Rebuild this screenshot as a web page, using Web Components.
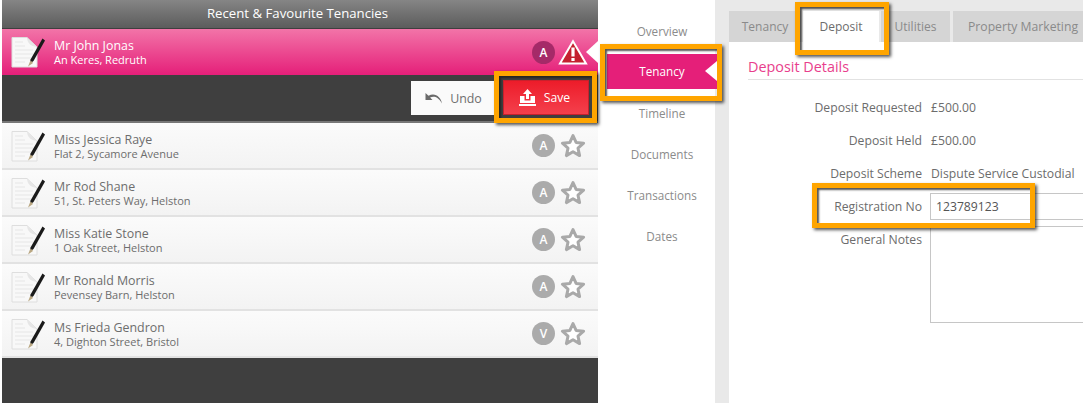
<!DOCTYPE html>
<html>
<head>
<meta charset="utf-8">
<style>
    html, body {
        margin: 0;
        width: 1083px;
        height: 403px;
        overflow: hidden;
        background: #fff;
        font-family: "Open Sans", "Noto Sans", sans-serif;
    }
</style>
</head>
<body>
<tenancy-app></tenancy-app>

<script>
const docIcon = /* html */ `
<svg width="34" height="34" viewBox="0 0 34 34">
    <path d="M1 2.500H16L26 12V32H1Z" fill="#f8f8f8" stroke="#dedede" stroke-width="1"/>
    <path d="M16 2.500C16.500 7 18 11 26 12Z" fill="#e6e6e6"/>
    <path d="M4 7H12M4 11H14M4 15H22M4 19H22M4 23H20M4 27H14" stroke="#e6e6e6" stroke-width="1.200"/>
    <path d="M31.500 3.500L34 5.500L22.500 26L19 28.500L19.500 24.500Z" fill="#1a1a1a"/>
    <path d="M19.200 26L17 31.500L22 28L21 26.500Z" fill="#b9a782"/>
</svg>`;

const starIcon = /* html */ `
<svg width="28" height="28" viewBox="0 0 28 28">
    <path d="M14 3.500L17.100 10.400L24.600 11.200L19 16.200L20.600 23.600L14 19.800L7.400 23.600L9 16.200L3.400 11.200L10.900 10.400Z"
        fill="#fff" stroke="#a9a9a9" stroke-width="3" stroke-linejoin="round"/>
</svg>`;

const warnIcon = /* html */ `
<svg width="30" height="26" viewBox="0 0 30 26">
    <path d="M15 2.200L28 24.500H2Z" fill="#c4212f" stroke="#fff" stroke-width="2" stroke-linejoin="miter"/>
    <rect x="13.400" y="8.500" width="3.200" height="9" fill="#fff"/>
    <rect x="13.400" y="19" width="3.200" height="3" fill="#fff"/>
</svg>`;

class TenancyRow extends HTMLElement {
    constructor() {
        super();
        const shadow = this.attachShadow({ mode: "open" });
        const letter = this.getAttribute("letter") || "A";
        const active = this.hasAttribute("active");
        shadow.innerHTML = /* html */ `
        <style>
            :host {
                display: flex;
                align-items: center;
                box-sizing: border-box;
                height: 47px;
                padding: 0 10px 0 9px;
                background: linear-gradient(#fbfbfb, #f3f3f3);
                border-bottom: 2px solid #e2e2e2;
                color: #6d6d6d;
            }
            :host([active]) {
                height: 46px;
                border-bottom: 0;
                background: linear-gradient(#f274a8, #e51f79);
                color: #fff;
            }
            .doc { width: 34px; height: 34px; margin-right: 9px; }
            .text { flex: 1; min-width: 0; padding-top: 2px; }
            .name { font-size: 12.4px; line-height: 15px; }
            .addr { font-size: 11px; line-height: 14px; }
            :host([active]) .text { padding-top: 1px; padding-bottom: 1px; }
            .badge {
                width: 23px;
                height: 23px;
                border-radius: 50%;
                background: #ababab;
                color: #fff;
                font-size: 12px;
                font-weight: 600;
                display: flex;
                align-items: center;
                justify-content: center;
            }
            :host([active]) .badge { background: #a52a68; }
            .flag { width: 30px; height: 28px; margin-left: 3px; display: flex; align-items: center; justify-content: center; }
            svg { display: block; }
        </style>
        <div class="doc">${docIcon}</div>
        <div class="text">
            <div class="name"><slot name="name"></slot></div>
            <div class="addr"><slot name="addr"></slot></div>
        </div>
        <div class="badge">${letter}</div>
        <div class="flag">${active ? warnIcon : starIcon}</div>
        `;
    }
}

class TenancyPanel extends HTMLElement {
    constructor() {
        super();
        const shadow = this.attachShadow({ mode: "open" });
        shadow.innerHTML = /* html */ `
        <style>
            :host {
                display: flex;
                flex-direction: column;
                width: 596px;
                height: 403px;
                margin-left: 2px;
                background: #3f3f3f;
                position: relative;
            }
            .title {
                height: 28px;
                box-sizing: border-box;
                padding: 0 5px 2px 0;
                border-bottom: 0;
                margin-bottom: 1px;
                background: linear-gradient(#858585, #5c5c5c);
                color: #fff;
                font-size: 13.2px;
                display: flex;
                align-items: center;
                justify-content: center;
            }
            .toolbar {
                height: 48px;
                box-sizing: border-box;
                padding: 6px 9px 6px 0;
                display: flex;
                justify-content: flex-end;
                align-items: flex-start;
                gap: 9px;
                border-bottom: 2px solid #777;
            }
            button {
                font: inherit;
                border: 0;
                display: flex;
                align-items: center;
                justify-content: center;
                height: 34px;
                padding: 0;
            }
            .undo { width: 83px; gap: 6px; padding-left: 2px; background: #fafafa; color: #6e6e6e; font-size: 12.4px; }
            .save {
                width: 86px;
                gap: 8px;
                height: 35px;
                margin-top: -1px;
                background: linear-gradient(#ed1c2a, #f4404c);
                border: 1px solid #c9202c;
                box-sizing: border-box;
                color: #fff;
                font-size: 12.2px;
                padding-right: 3px;
            }
            .pointer {
                position: absolute;
                right: 0;
                top: 41px;
                width: 0;
                height: 0;
                border-top: 11px solid transparent;
                border-bottom: 11px solid transparent;
                border-right: 12px solid #fff;
            }
        </style>
        <div class="title">Recent &amp; Favourite Tenancies</div>
        <slot name="current"></slot>
        <div class="toolbar">
            <button class="undo">
                <svg width="19" height="12" viewBox="0 0 18 12">
                    <path d="M0 1V8H7L4.600 5.600C8 3.800 12.500 4.300 16.500 11.500C15.500 5 9.500 0 3 3.700Z" fill="#6a6a6a"/>
                </svg>
                Undo
            </button>
            <button class="save">
                <svg width="17" height="18" viewBox="0 0 17 18">
                    <path d="M8.500 0L13 5H10V10H7V5H4Z" fill="#fff"/>
                    <path d="M1 7H5.500V11.500H11.500V7H16V14H1Z" fill="#fff"/>
                    <rect x="0" y="15" width="17" height="2" fill="#fff"/>
                </svg>
                Save
            </button>
        </div>
        <slot></slot>
        <div class="pointer"></div>
        `;
    }
}

class SideNav extends HTMLElement {
    constructor() {
        super();
        const shadow = this.attachShadow({ mode: "open" });
        const items = ["Overview", "Tenancy", "Timeline", "Documents", "Transactions", "Dates"];
        shadow.innerHTML = /* html */ `
        <style>
            :host {
                display: flex;
                flex-direction: column;
                box-sizing: border-box;
                width: 117px;
                padding: 17px 0 0 9px;
                background: #fff;
                color: #8b8b8b;
                font-size: 11.7px;
            }
            .item {
                height: 28px;
                line-height: 28px;
                margin-bottom: 13px;
                text-align: center;
                width: 110px;
                box-sizing: border-box;
            }
            .item.on {
                height: 35px;
                line-height: 35px;
                margin: 0 0 10px;
                background: #e51f79;
                color: #fff;
                position: relative;
            }
            .item.on::after {
                content: "";
                position: absolute;
                right: 0;
                top: 7px;
                border-top: 10px solid transparent;
                border-bottom: 10px solid transparent;
                border-right: 12px solid #fff;
            }
            .item:first-of-type { margin-bottom: 9px; }
        </style>
        ${items.map(t => `<div class="item ${t === "Tenancy" ? "on" : ""}">${t}</div>`).join("")}
        `;
    }
}

class DepositPanel extends HTMLElement {
    constructor() {
        super();
        const shadow = this.attachShadow({ mode: "open" });
        shadow.innerHTML = /* html */ `
        <style>
            :host {
                display: flex;
                flex-direction: column;
                flex: 1;
                min-width: 0;
                height: 403px;
                box-sizing: border-box;
                padding: 11px 0 0 14px;
                background: #e9e9e9;
                overflow: hidden;
                color: #6c6c6c;
                font-size: 12.2px;
            }
            .tabs { display: flex; gap: 2px; height: 31px; white-space: nowrap; font-size: 12px; }
            .tab {
                background: #d5d5d5;
                color: #8a8a8a;
                display: flex;
                align-items: center;
                justify-content: center;
                flex: none;
            }
            .tab.on { background: #fff; color: #6c6c6c; }
            .body { flex: 1; background: #fff; padding: 14px 0 0 19px; }
            h2 {
                margin: 0;
                height: 23px;
                line-height: 22px;
                font-size: 14.4px;
                font-weight: 400;
                color: #e83e8c;
                border-bottom: 1px solid #e2e2e2;
            }
            .form {
                display: grid;
                grid-template-columns: 174px 1fr;
                column-gap: 8px;
                margin-top: 11px;
                width: 400px;
            }
            .label { text-align: right; line-height: 33px; white-space: nowrap; }
            .value { line-height: 33px; white-space: nowrap; padding-left: 1px; }
            .input {
                box-sizing: border-box;
                height: 27px;
                margin: 3px 0 0 0;
                border: 1px solid #c6c6c6;
                padding-left: 5px;
                line-height: 25px;
                color: #555;
            }
            .area {
                box-sizing: border-box;
                height: 97px;
                margin-top: 3px;
                border: 1px solid #c6c6c6;
            }
            .notes { line-height: 20px; margin-top: 7px; }
        </style>
        <div class="tabs">
            <div class="tab" style="width:72px">Tenancy</div>
            <div class="tab on" style="width:76px">Deposit</div>
            <div class="tab" style="width:69px">Utilities</div>
            <div class="tab" style="width:140px;margin-left:1px;font-size:12.2px">Property Marketing</div>
        </div>
        <div class="body">
            <h2>Deposit Details</h2>
            <div class="form">
                <div class="label">Deposit Requested</div><div class="value">£500.00</div>
                <div class="label">Deposit Held</div><div class="value">£500.00</div>
                <div class="label">Deposit Scheme</div><div class="value">Dispute Service Custodial</div>
                <div class="label">Registration No</div><div class="input">123789123</div>
                <div class="label notes">General Notes</div><div class="area"></div>
            </div>
        </div>
        `;
    }
}

class CalloutBox extends HTMLElement {
    constructor() {
        super();
        const shadow = this.attachShadow({ mode: "open" });
        shadow.innerHTML = /* html */ `
        <style>
            :host {
                position: absolute;
                box-sizing: border-box;
                border: 5px solid #ffa500;
                box-shadow: 2px 2px 3px rgba(30, 30, 30, .75), inset 2px 2px 2px rgba(30, 30, 30, .75);
                pointer-events: none;
            }
        </style>
        `;
    }
}

class TenancyApp extends HTMLElement {
    constructor() {
        super();
        const shadow = this.attachShadow({ mode: "open" });
        const rows = [
            ["A", "Miss Jessica Raye", "Flat 2, Sycamore Avenue"],
            ["A", "Mr Rod Shane", "51, St. Peters Way, Helston"],
            ["A", "Miss Katie Stone", "1 Oak Street, Helston"],
            ["A", "Mr Ronald Morris", "Pevensey Barn, Helston"],
            ["V", "Ms Frieda Gendron", "4, Dighton Street, Bristol"],
        ];
        shadow.innerHTML = /* html */ `
        <style>
            :host { display: flex; width: 1083px; height: 403px; position: relative; overflow: hidden; }
        </style>
        <tenancy-panel>
            <tenancy-row slot="current" active letter="A">
                <span slot="name">Mr John Jonas</span>
                <span slot="addr">An Keres, Redruth</span>
            </tenancy-row>
            ${rows.map(r => `
            <tenancy-row letter="${r[0]}">
                <span slot="name">${r[1]}</span>
                <span slot="addr">${r[2]}</span>
            </tenancy-row>`).join("")}
        </tenancy-panel>
        <side-nav></side-nav>
        <deposit-panel></deposit-panel>
        <callout-box style="left:494px;top:71px;width:103px;height:52px"></callout-box>
        <callout-box style="left:600px;top:44px;width:122px;height:57px"></callout-box>
        <callout-box style="left:795px;top:2px;width:94px;height:53px"></callout-box>
        <callout-box style="left:812px;top:183px;width:223px;height:45px"></callout-box>
        `;
    }
}

customElements.define("tenancy-row", TenancyRow);
customElements.define("tenancy-panel", TenancyPanel);
customElements.define("side-nav", SideNav);
customElements.define("deposit-panel", DepositPanel);
customElements.define("callout-box", CalloutBox);
customElements.define("tenancy-app", TenancyApp);
</script>
</body>
</html>
